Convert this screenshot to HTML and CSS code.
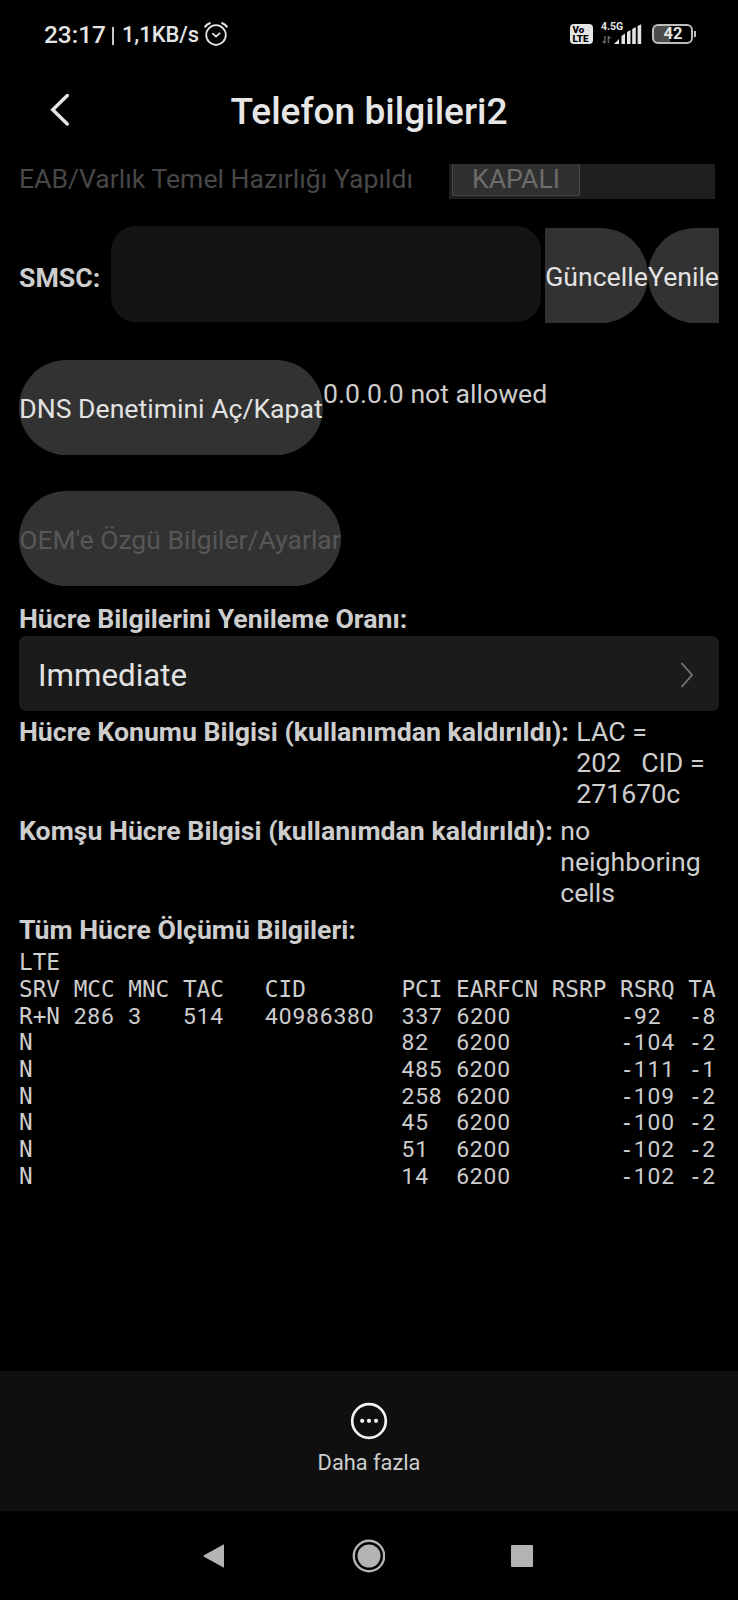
FILE: index.html
```
<!DOCTYPE html>
<html lang="tr">

<head>
<meta charset="utf-8">
<title>Telefon bilgileri2</title>
<meta name="viewport" content="width=device-width, initial-scale=1">
<link rel="stylesheet" href="styles.css">
</head>

<body>

<div class="statusbar">
  <span class="clock">23:17</span>
  <span class="divider"></span>
  <span class="speed">1,1KB/s</span>
  <svg class="alarm" width="26" height="26" viewBox="0 0 26 26" fill="none" stroke="#e4e4e4" stroke-width="1.8" stroke-linecap="round" stroke-linejoin="round">
    <circle cx="13" cy="14" r="9.8"/>
    <path d="M2.2 5.6 Q3.8 3.2 6.8 2.2 M23.8 5.6 Q22.2 3.2 19.2 2.2" stroke-width="2.2"/>
    <path d="M9.8 12.7 L13 15.6 L16.6 12.3"/>
  </svg>
  <div class="status-right">
    <div class="volte"><span>Vo</span><span>LTE</span></div>
    <div class="signal">
      <span class="network">4.5G</span>
      <svg width="42" height="22" viewBox="0 0 42 22">
        <path d="M4 13 V20 M1.8 18 L4 20.3 M7.3 20.3 V13.3 M7.3 13.3 L9.5 15.5" stroke="#777" stroke-width="1.2" fill="none"/>
        <path d="M13 21 L18 16 V21 Z M20.5 21 V13 L24 10.5 V21 Z M26 21 V9 L29.5 7 V21 Z M31.2 21 V6 L34.8 4 V21 Z M36.6 21 V3 L40.2 1.2 V21 Z" fill="#e4e4e4"/>
      </svg>
    </div>
    <div class="battery"><span>42</span></div>
  </div>
</div>

<div class="titlebar">
  <svg class="back" width="20" height="34" viewBox="0 0 20 34" fill="none" stroke="#e6e6e6" stroke-width="3.4" stroke-linecap="round">
    <path d="M17.3 2.5 L2.7 16.7 L17.3 31"/>
  </svg>
  <h1>Telefon bilgileri2</h1>
</div>

<div class="content">

  <div class="row provision">
    <span class="disabled">EAB/Varlık Temel Hazırlığı Yapıldı</span>
    <div class="switch"><div class="thumb">KAPALI</div></div>
  </div>

  <div class="row smsc">
    <b>SMSC:</b>
    <div class="input"></div>
    <div class="button update">Güncelle</div>
    <div class="button refresh">Yenile</div>
  </div>

  <div class="row dns">
    <div class="button">DNS Denetimini Aç/Kapat</div>
    <span class="dns-state">0.0.0.0 not allowed</span>
  </div>

  <div class="row oem">
    <div class="button off">OEM'e Özgü Bilgiler/Ayarlar</div>
  </div>

  <b>Hücre Bilgilerini Yenileme Oranı:</b>
  <div class="select">
    <span>Immediate</span>
    <svg width="14" height="28" viewBox="0 0 14 28" fill="none" stroke="#777" stroke-width="1.8">
      <path d="M1.5 2 L12 14 L1.5 26"/>
    </svg>
  </div>

  <div class="row info">
    <b>Hücre Konumu Bilgisi (kullanımdan kaldırıldı):</b>
    <span>LAC =<br>202&nbsp;&nbsp; CID =<br>271670c</span>
  </div>
  <div class="row info">
    <b>Komşu Hücre Bilgisi (kullanımdan kaldırıldı):</b>
    <span>no<br>neighboring<br>cells</span>
  </div>

  <b>Tüm Hücre Ölçümü Bilgileri:</b>
<pre class="cells">LTE
SRV MCC MNC TAC   CID       PCI EARFCN RSRP RSRQ TA
R+N <i>286</i> <i>3</i>   <i>514</i>   <i>40986380</i>  <i>337</i> <i>6200</i>        -<i>92</i>  -<i>8</i>
N                           <i>82</i>  <i>6200</i>        -<i>104</i> -<i>2</i>
N                           <i>485</i> <i>6200</i>        -<i>111</i> -<i>1</i>
N                           <i>258</i> <i>6200</i>        -<i>109</i> -<i>2</i>
N                           <i>45</i>  <i>6200</i>        -<i>100</i> -<i>2</i>
N                           <i>51</i>  <i>6200</i>        -<i>102</i> -<i>2</i>
N                           <i>14</i>  <i>6200</i>        -<i>102</i> -<i>2</i></pre>

</div>

<div class="more">
  <svg width="38" height="38" viewBox="0 0 38 38">
    <circle cx="19" cy="19" r="16.8" fill="none" stroke="#f2f2f2" stroke-width="2.7"/>
    <circle cx="12.2" cy="18.8" r="2.1" fill="#f2f2f2"/>
    <circle cx="19" cy="18.8" r="2.1" fill="#f2f2f2"/>
    <circle cx="26" cy="18.8" r="2.1" fill="#f2f2f2"/>
  </svg>
  <span>Daha fazla</span>
</div>

<div class="navbar">
  <svg width="22" height="26" viewBox="0 0 22 26"><path d="M21 1.2 V24.8 L1 13.8 Q0 13 1 12.2 Z" fill="#b4b4b4"/></svg>
  <svg width="34" height="34" viewBox="0 0 34 34">
    <circle cx="18" cy="17" r="15.2" fill="none" stroke="#b4b4b4" stroke-width="2.4"/>
    <circle cx="18" cy="17" r="11.5" fill="#b4b4b4"/>
  </svg>
  <svg width="22" height="22" viewBox="0 0 22 22"><rect width="22" height="22" rx="1" fill="#b4b4b4"/></svg>
</div>

</body>

</html>
```
FILE: styles.css
```
* {
  box-sizing: border-box;
}

body {
  margin: 0;
  width: 738px;
  height: 1600px;
  display: flex;
  flex-direction: column;
  overflow: hidden;
  background-color: #000;
  color: #cdcdcd;
  font-family: Roboto, sans-serif;
  font-size: 26.6px;
  line-height: 31.3px;
}

b {
  font-size: 26.7px;
}

svg {
  display: block;
  flex: none;
}

/* status bar */
.statusbar {
  height: 68px;
  padding: 0 42px 0 44px;
  display: flex;
  align-items: center;
  color: #e4e4e4;
  font-weight: 500;
  white-space: nowrap;
}

.clock {
  padding-top: 2px;
  font-size: 24.4px;
}

.divider {
  width: 2px;
  height: 18px;
  margin: 3px 8px 0 6px;
  background-color: #c8c8c8;
}

.speed {
  padding-top: 2px;
  font-size: 21.9px;
}

.alarm {
  margin-left: 4px;
}

.status-right {
  margin-left: auto;
  display: flex;
  align-items: center;
}

.volte {
  width: 23px;
  height: 20px;
  border-radius: 4px;
  background-color: #e4e4e4;
  color: #000;
  font-size: 9.8px;
  font-weight: 900;
  line-height: 9px;
  padding: 1px 0 0 2.5px;
  display: flex;
  flex-direction: column;
}

.signal {
  position: relative;
  margin: 0 9px 0 8px;
}

.network {
  position: absolute;
  left: 0;
  top: -1px;
  font-size: 10.5px;
  font-weight: 700;
  line-height: 10px;
}

.battery {
  position: relative;
  width: 41px;
  height: 20px;
  margin-right: 3px;
  border: 2px solid #bdbdbd;
  border-radius: 6px;
  background: linear-gradient(90deg, #4c4c4c 42%, #000 42%);
  display: flex;
  justify-content: center;
  align-items: center;
  padding-left: 1px;
  font-size: 16.5px;
  font-weight: 700;
}

.battery:after {
  content: "";
  position: absolute;
  right: -5px;
  top: 5px;
  width: 2px;
  height: 6px;
  background-color: #bdbdbd;
}

/* title */
.titlebar {
  height: 96px;
  padding: 0 50px 12px;
  display: flex;
  align-items: center;
}

.titlebar h1 {
  flex: 1;
  margin: 0 20px 0 0;
  padding-top: 3px;
  color: #e6e6e6;
  font-size: 37.1px;
  font-weight: 500;
  line-height: 44px;
  text-align: center;
}

/* scrolled list, cut off under the title */
.content {
  height: 1207px;
  padding: 0 19px;
  overflow: hidden;
  flex: none;
  white-space: nowrap;
}

.content > b {
  display: block;
  height: 31.3px;
  padding-top: 1.5px;
}

.row {
  display: flex;
}

.provision {
  height: 62px;
  justify-content: space-between;
  padding: 0 4px 0 0;
}

.disabled {
  margin-top: -1px;
  color: #474747;
}

.switch {
  width: 266px;
  height: 35px;
  padding: 0 3px 3px;
  background-color: #1f1f1f;
}

.thumb {
  width: 128px;
  height: 32px;
  border: 1px solid #4a4a4a;
  border-top: none;
  border-radius: 0 0 2px 2px;
  background-color: #303030;
  color: #6c6c6c;
  line-height: 29px;
  text-align: center;
}

.smsc {
  height: 134px;
}

.smsc b {
  width: 92px;
  padding-top: 36.5px;
}

.input {
  width: 430px;
  height: 96px;
  margin-right: 4px;
  border-radius: 25px;
  background-color: #141414;
}

.button {
  height: 95px;
  border-radius: 48px;
  background-color: #323232;
  color: #e2e2e2;
  line-height: 97px;
  text-align: center;
}

.update {
  width: 103px;
  margin-top: 2px;
  border-radius: 0 48px 48px 0;
}

.refresh {
  width: 71px;
  margin-top: 2px;
  border-radius: 48px 0 0 48px;
}

.dns {
  height: 131px;
}

.dns .button {
  width: 304px;
}

.dns-state {
  padding-top: 18px;
}

.oem {
  height: 111px;
}

.oem .button {
  width: 322px;
  font-size: 26.5px;
}

.off {
  color: #575757;
}

.select {
  height: 75px;
  margin: 3px 0 4px;
  padding: 3px 25px 0 19px;
  border-radius: 7px;
  background-color: #1b1b1b;
  color: #e2e2e2;
  font-size: 31.3px;
  display: flex;
  align-items: center;
  justify-content: space-between;
}

.info {
  height: 99.3px;
  padding-top: 1.3px;
  gap: 7.5px;
}

.info span {
  font-size: 26.7px;
}

/* cell table, digits use a face with a plain zero on the same 13.66px step */
.cells {
  margin: 4px 0 0;
  font-family: "DejaVu Sans Mono", monospace;
  font-size: 22.7px;
  line-height: 26.7px;
}

.cells i {
  font-family: Roboto, sans-serif;
  font-size: 22.8px;
  font-style: normal;
  letter-spacing: 0.86px;
  line-height: 1px;
}

/* bottom */
.more {
  height: 140px;
  padding-top: 31px;
  flex: none;
  background-color: #0f0f0f;
  display: flex;
  flex-direction: column;
  align-items: center;
}

.more span {
  margin-top: 9px;
  font-size: 21.8px;
  line-height: 28px;
}

.navbar {
  height: 89px;
  flex: none;
  padding: 0 205px 0 203px;
  display: flex;
  align-items: center;
  justify-content: space-between;
}
```
